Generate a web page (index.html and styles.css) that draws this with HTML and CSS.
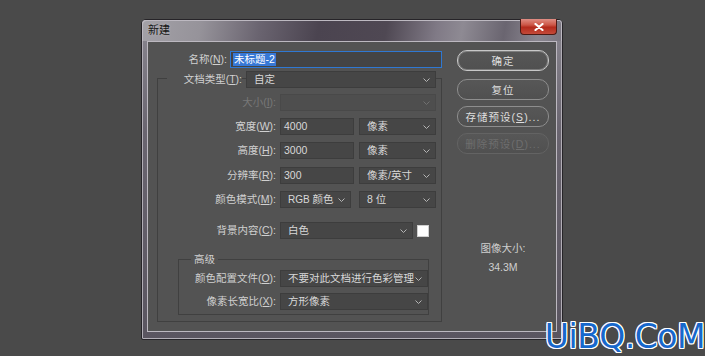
FILE: index.html
```html
<!DOCTYPE html>
<html lang="zh">
<head>
<meta charset="utf-8">
<title>新建</title>
<link rel="stylesheet" href="styles.css">
</head>
<body>
<div class="window">
  <div class="titlebar">
    <span class="title">新建</span>
    <div class="close"><svg width="10" height="8" viewBox="0 0 10 8"><path d="M1.5 1 L8.5 7 M8.5 1 L1.5 7" stroke="#fff" stroke-width="2.2" stroke-linecap="round"/></svg></div>
  </div>
  <div class="frame">
    <div class="client">
      <div class="form">
        <div class="row name-row">
          <span class="lbl">名称(<u>N</u>):</span>
          <div class="field name-field"><span class="hl">未标题-2</span></div>
        </div>
        <div class="group">
          <div class="row type-row">
            <span class="lbl">文档类型(<u>T</u>):</span>
            <div class="field select w190">自定<svg class="chev" width="7" height="4" viewBox="0 0 7 4"><path d="M0.5 0.5 L3.5 3.5 L6.5 0.5" fill="none" stroke="#b4b4b4"/></svg></div>
          </div>
          <div class="row in mt6">
            <span class="lbl dis">大小(<u>I</u>):</span>
            <div class="field select w156 disabled"><svg class="chev" width="7" height="4" viewBox="0 0 7 4"><path d="M0.5 0.5 L3.5 3.5 L6.5 0.5" fill="none" stroke="#707070"/></svg></div>
          </div>
          <div class="row in mt7">
            <span class="lbl">宽度(<u>W</u>):</span>
            <div class="field w74">4000</div>
            <div class="field select w77 ml5">像素<svg class="chev" width="7" height="4" viewBox="0 0 7 4"><path d="M0.5 0.5 L3.5 3.5 L6.5 0.5" fill="none" stroke="#b4b4b4"/></svg></div>
          </div>
          <div class="row in mt7">
            <span class="lbl">高度(<u>H</u>):</span>
            <div class="field w74">3000</div>
            <div class="field select w77 ml5">像素<svg class="chev" width="7" height="4" viewBox="0 0 7 4"><path d="M0.5 0.5 L3.5 3.5 L6.5 0.5" fill="none" stroke="#b4b4b4"/></svg></div>
          </div>
          <div class="row in mt8">
            <span class="lbl">分辨率(<u>R</u>):</span>
            <div class="field w74">300</div>
            <div class="field select w77 ml5">像素/英寸<svg class="chev" width="7" height="4" viewBox="0 0 7 4"><path d="M0.5 0.5 L3.5 3.5 L6.5 0.5" fill="none" stroke="#b4b4b4"/></svg></div>
          </div>
          <div class="row in mt7">
            <span class="lbl">颜色模式(<u>M</u>):</span>
            <div class="field select w71"><span class="lat">RGB</span>&nbsp;颜色<svg class="chev" width="7" height="4" viewBox="0 0 7 4"><path d="M0.5 0.5 L3.5 3.5 L6.5 0.5" fill="none" stroke="#b4b4b4"/></svg></div>
            <div class="field select w77 ml8">8 位<svg class="chev" width="7" height="4" viewBox="0 0 7 4"><path d="M0.5 0.5 L3.5 3.5 L6.5 0.5" fill="none" stroke="#b4b4b4"/></svg></div>
          </div>
          <div class="row in mt14">
            <span class="lbl">背景内容(<u>C</u>):</span>
            <div class="field select w133">白色<svg class="chev" width="7" height="4" viewBox="0 0 7 4"><path d="M0.5 0.5 L3.5 3.5 L6.5 0.5" fill="none" stroke="#b4b4b4"/></svg></div>
            <div class="swatch"></div>
          </div>
          <div class="adv">
            <div class="adv-title">高级</div>
            <div class="row adv-row mt4">
              <span class="lbl">颜色配置文件(<u>O</u>):</span>
              <div class="field select w148">不要对此文档进行色彩管理<svg class="chev" width="7" height="4" viewBox="0 0 7 4"><path d="M0.5 0.5 L3.5 3.5 L6.5 0.5" fill="none" stroke="#b4b4b4"/></svg></div>
            </div>
            <div class="row adv-row mt6">
              <span class="lbl">像素长宽比(<u>X</u>):</span>
              <div class="field select w148">方形像素<svg class="chev" width="7" height="4" viewBox="0 0 7 4"><path d="M0.5 0.5 L3.5 3.5 L6.5 0.5" fill="none" stroke="#b4b4b4"/></svg></div>
            </div>
          </div>
        </div>
      </div>
      <div class="side">
        <div class="btn default">确定</div>
        <div class="btn mt8">复位</div>
        <div class="btn mt6">存储预设(<u>S</u>)...</div>
        <div class="btn disabled mt6">删除预设(<u>D</u>)...</div>
        <div class="info">
          <div>图像大小:</div>
          <div>34.3M</div>
        </div>
      </div>
    </div>
  </div>
</div>
<div class="wm">UiBQ.CoM</div>
</body>
</html>
```
FILE: styles.css
```css
* { box-sizing: border-box; }
body {
  margin: 0;
  width: 705px;
  height: 356px;
  overflow: hidden;
  position: relative;
  background: #4a4a4a;
  font-family: "Liberation Sans", "Noto Sans CJK SC", sans-serif;
  font-size: 10.5px;
  color: #d0d0d0;
}
u { text-decoration: underline; text-underline-offset: 1px; }

.window {
  margin: 19px 0 0 141px;
  width: 422px;
  height: 321px;
  border: 1px solid #262428;
  border-radius: 5px 5px 2px 2px;
  display: flex;
  flex-direction: column;
  background: linear-gradient(#8a8790, #6a6570 35%, #5a5560);
  box-shadow: inset 0 0 0 1px #b2aeb6;
}
.titlebar {
  height: 21px;
  flex: none;
  display: flex;
  align-items: flex-start;
  border-radius: 4px 4px 0 0;
  background: linear-gradient(100deg, #a3a1a7 0%, #96939a 14%, #6a6470 28%, #4b4450 42%, #4f4853 58%, #807a86 70%, #8e8a93 76%, #6a6570 86%, #8a8690 94%, #7a7680 100%);
  box-shadow: inset 1px 1px 0 #bdb9c1, inset -1px 0 0 #bdb9c1;
}
.title {
  margin: 3px 0 0 6px;
  color: #151515;
  font-size: 11px;
  line-height: 15px;
  text-shadow: 0 0 3px rgba(255,255,255,0.35);
}
.close {
  margin: -1px 5px 0 auto;
  width: 37px;
  height: 16px;
  border: 1px solid #4d1a14;
  border-top: none;
  border-radius: 0 0 4px 4px;
  background: linear-gradient(#e08e84, #cc5646 40%, #b32b1c 55%, #c44a3a);
  display: flex;
  align-items: center;
  justify-content: center;
}
.frame {
  flex: 1;
  padding: 0 5px 7px 5px;
}
.client {
  height: 100%;
  background: #535353;
  border: 1px solid #bcb8c0;
  display: grid;
  grid-template-columns: 294px 92px;
  column-gap: 15px;
  align-items: start;
}

.form { padding-top: 9px; }
.row {
  display: flex;
  align-items: center;
  height: 17px;
}
.lbl {
  flex: none;
  text-align: right;
  white-space: nowrap;
  line-height: 17px;
  height: 17px;
}
.lbl.dis { color: #787878; }
.name-row .lbl { width: 79px; margin-right: 3px; }
.field {
  flex: none;
  height: 17px;
  background: #464646;
  border: 1px solid #3d3d3d;
  display: flex;
  align-items: center;
  padding: 0 3px;
  color: #d8d8d8;
  line-height: 15px;
  white-space: nowrap;
}
.lat { font-size: 10px; }
.select { padding: 0 5px 0 7px; }
.select .chev { margin-left: auto; flex: none; }
.disabled.field { background: #4e4e4e; border-color: #494949; }
.name-field {
  width: 212px;
  border-color: #2f78d2;
  background: #444444;
  padding: 0 2px;
}
.hl { background: #3778d6; color: #ffffff; padding: 0 1px; line-height: 13px; }

.w71 { width: 71px; }
.w74 { width: 74px; }
.w77 { width: 77px; }
.w133 { width: 133px; }
.w148 { width: 148px; }
.w156 { width: 156px; }
.w190 { width: 190px; }
.ml5 { margin-left: 5px; }
.ml8 { margin-left: 8px; }
.mt4 { margin-top: 4px; }
.mt6 { margin-top: 6px; }
.mt7 { margin-top: 7px; }
.mt8 { margin-top: 8px; }
.mt14 { margin-top: 14px; }

.group {
  margin: 10px 0 0 9px;
  width: 285px;
  border: 1px solid #404040;
  padding-bottom: 6px;
}
.type-row { margin: -8px 0 0 9px; }
.type-row .lbl { width: 75px; margin-right: 4px; background: #535353; }
.in .lbl { width: 118px; margin-right: 4px; }
.swatch {
  margin-left: 4px;
  width: 12px;
  height: 12px;
  background: #ffffff;
  border: 1px solid #cfcfcf;
}
.adv {
  margin: 20px 0 0 20px;
  width: 251px;
  border: 1px solid #404040;
  padding-bottom: 4px;
}
.adv-title {
  margin: -8px 0 0 12px;
  padding: 0 3px;
  width: fit-content;
  height: 14px;
  line-height: 14px;
  background: #535353;
}
.adv-row .lbl { width: 97px; margin-right: 4px; }

.side {
  display: flex;
  flex-direction: column;
  padding-top: 8px;
}
.btn {
  height: 21px;
  border: 1px solid #8e8e8e;
  border-radius: 10px;
  background: linear-gradient(#575757, #505050);
  display: flex;
  align-items: center;
  justify-content: center;
  color: #dedede;
  letter-spacing: 1px;
  white-space: nowrap;
}
.btn.default { border-color: #c8c8c8; box-shadow: inset 0 0 0 1px rgba(200,200,200,0.35); }
.btn.disabled { border-color: #636363; color: #6e6e6e; }
.info {
  margin-top: 85px;
  text-align: center;
  line-height: 19px;
  color: #cfcfcf;
}

.wm {
  position: absolute;
  right: 0;
  bottom: 0;
  font-family: "DejaVu Sans", sans-serif;
  font-size: 33px;
  line-height: 38px;
  color: #1768cc;
  letter-spacing: -0.5px;
  text-shadow: 1px 0 0 #fff, -1px 0 0 #fff, 0 1px 0 #fff, 0 -1px 0 #fff, 1px 1px 0 #fff, -1px -1px 0 #fff, 1px -1px 0 #fff, -1px 1px 0 #fff;
}
```
